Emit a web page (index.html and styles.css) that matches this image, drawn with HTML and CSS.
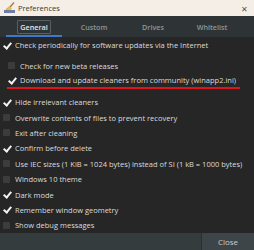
FILE: index.html
```html
<!DOCTYPE html>
<html lang="en">
<head>
  <meta charset="UTF-8" />
  <title>Preferences</title>
  <link rel="stylesheet" href="styles.css">
</head>
<body>
<div class="window">
  <div class="titlebar">
    <svg class="app-icon" width="11" height="11" viewBox="0 0 11 11">
      <rect x="0" y="8" width="11" height="3" fill="#6d7fa8"/>
      <path d="M2 8 L5 4 L8 6 L7 8 Z" fill="#e8c04a"/>
      <path d="M6 5 L10 0.5" stroke="#b47a3a" stroke-width="1.4"/>
      <path d="M2 8 L4 5.5" stroke="#c9962e" stroke-width="0.8"/>
    </svg>
    <span class="title">Preferences</span>
    <span class="close-x">✕</span>
  </div>

  <div class="tabs">
    <div class="tab active"><span class="tab-label">General</span></div>
    <div class="tab"><span class="tab-label">Custom</span></div>
    <div class="tab"><span class="tab-label">Drives</span></div>
    <div class="tab"><span class="tab-label">Whitelist</span></div>
  </div>

  <div class="content">
    <div class="row checked"><span class="box"></span>Check periodically for software updates via the Internet</div>
    <div class="group">
      <div class="row"><span class="box"></span>Check for new beta releases</div>
      <div class="row checked marked"><span class="box"></span>Download and update cleaners from community (winapp2.ini)</div>
    </div>
    <div class="row checked spaced"><span class="box"></span>Hide irrelevant cleaners</div>
    <div class="row"><span class="box"></span>Overwrite contents of files to prevent recovery</div>
    <div class="row"><span class="box"></span>Exit after cleaning</div>
    <div class="row checked"><span class="box"></span>Confirm before delete</div>
    <div class="row"><span class="box"></span>Use IEC sizes (1 KiB = 1024 bytes) instead of SI (1 kB = 1000 bytes)</div>
    <div class="row"><span class="box"></span>Windows 10 theme</div>
    <div class="row checked"><span class="box"></span>Dark mode</div>
    <div class="row checked"><span class="box"></span>Remember window geometry</div>
    <div class="row"><span class="box"></span>Show debug messages</div>
  </div>

  <div class="footer">
    <button class="close-btn">Close</button>
  </div>
</div>
</body>
</html>
```

FILE: styles.css
```css
body { margin: 0; font-family: 'Open Sans', sans-serif; background: #262626; }
.window { width: 254px; height: 250px; display: flex; flex-direction: column; overflow: hidden; }

.titlebar { height: 17px; background: #f4eee7; display: flex; align-items: center; padding: 0 4px; box-sizing: border-box; }
.app-icon { margin-right: 3px; margin-top: -2px; }
.title { flex: 1; font-size: 7.5px; color: #3a3a3a; }
.close-x { font-size: 8px; color: #555; margin-right: 2px; }

.tabs { height: 21px; background: #2e3436; display: flex; padding-left: 6px; }
.tab { width: 58px; display: flex; align-items: center; justify-content: center; font-size: 7.2px; font-weight: 600; color: #8e9597; }
.tab.active { width: 56px; color: #e6e6e6; border-bottom: 2px solid #3d78c9; margin-right: 2px; padding-top: 2px; }
.tab + .tab { margin-left: 1px; }
.tab.active .tab-label { border: 1px solid #5a5f61; border-radius: 1px; padding: 1px 2px; }

.content { flex: 1; display: flex; flex-direction: column; padding-top: 1px; }
.row { height: 15.4px; display: flex; align-items: center; padding-left: 3px; font-size: 7.5px; color: #dcdcdc; white-space: nowrap; }
.box { width: 7px; height: 7px; background: #3c3c3c; border-radius: 1px; margin-right: 5px; flex-shrink: 0; }
.checked .box { background: none; position: relative; }
.checked .box::after { content: ""; position: absolute; left: 2px; top: -1px; width: 3px; height: 6px; border: solid #f2f2f2; border-width: 0 2px 2px 0; transform: rotate(40deg); }

.group { margin-top: 5px; }
.group .row { padding-left: 8px; }
.marked { height: 14px; border-bottom: 2px solid #e0141c; margin: 0 14px 0 7px; padding-left: 1px !important; }
.spaced { margin-top: 5px; }

.footer { height: 17px; background: #353c3e; display: flex; justify-content: flex-end; }
.close-btn { width: 53px; height: 17px; background: #3e4548; border: none; border-left: 1px solid #2a2f31; color: #c8cccd; font-family: 'Open Sans', sans-serif; font-size: 8px; padding: 0; }
```
